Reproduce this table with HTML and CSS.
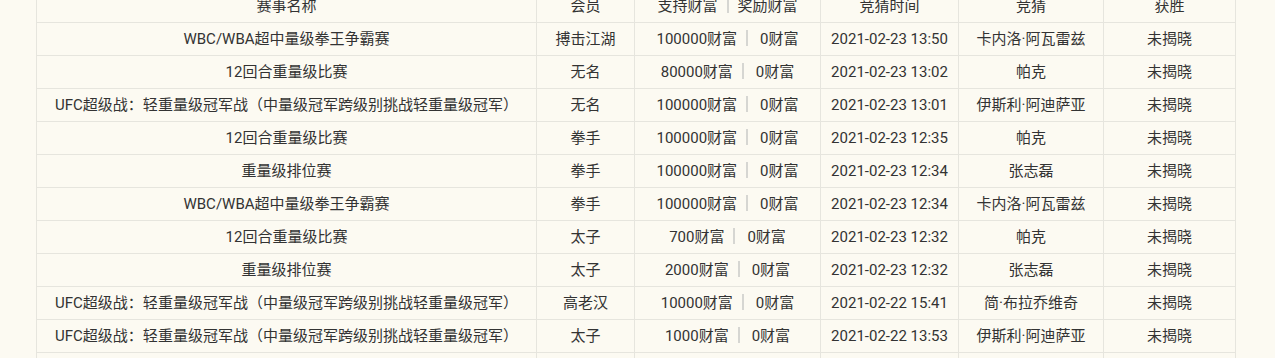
FILE: index.html
```html
<!DOCTYPE html>
<html lang="zh-CN">
<head>
<meta charset="utf-8">
<link rel="stylesheet" href="styles.css">
</head>
<body>
<div class="wrap">
<table class="list">
<colgroup>
<col class="c1"><col class="c2"><col class="c3"><col class="c4"><col class="c5"><col class="c6">
</colgroup>
<thead>
<tr><th>赛事名称</th><th>会员</th><th>支持财富<span class="sep"></span>奖励财富</th><th>竞猜时间</th><th>竞猜</th><th>获胜</th></tr>
</thead>
<tbody>
<tr><td>WBC/WBA超中量级拳王争霸赛</td><td>搏击江湖</td><td>100000财富<span class="sep"></span><span class="r">0财富</span></td><td>2021-02-23 13:50</td><td>卡内洛·阿瓦雷兹</td><td>未揭晓</td></tr>
<tr><td>12回合重量级比赛</td><td>无名</td><td>80000财富<span class="sep"></span><span class="r">0财富</span></td><td>2021-02-23 13:02</td><td>帕克</td><td>未揭晓</td></tr>
<tr><td>UFC超级战：轻重量级冠军战（中量级冠军跨级别挑战轻重量级冠军）</td><td>无名</td><td>100000财富<span class="sep"></span><span class="r">0财富</span></td><td>2021-02-23 13:01</td><td>伊斯利·阿迪萨亚</td><td>未揭晓</td></tr>
<tr><td>12回合重量级比赛</td><td>拳手</td><td>100000财富<span class="sep"></span><span class="r">0财富</span></td><td>2021-02-23 12:35</td><td>帕克</td><td>未揭晓</td></tr>
<tr><td>重量级排位赛</td><td>拳手</td><td>100000财富<span class="sep"></span><span class="r">0财富</span></td><td>2021-02-23 12:34</td><td>张志磊</td><td>未揭晓</td></tr>
<tr><td>WBC/WBA超中量级拳王争霸赛</td><td>拳手</td><td>100000财富<span class="sep"></span><span class="r">0财富</span></td><td>2021-02-23 12:34</td><td>卡内洛·阿瓦雷兹</td><td>未揭晓</td></tr>
<tr><td>12回合重量级比赛</td><td>太子</td><td>700财富<span class="sep"></span><span class="r">0财富</span></td><td>2021-02-23 12:32</td><td>帕克</td><td>未揭晓</td></tr>
<tr><td>重量级排位赛</td><td>太子</td><td>2000财富<span class="sep"></span><span class="r">0财富</span></td><td>2021-02-23 12:32</td><td>张志磊</td><td>未揭晓</td></tr>
<tr><td>UFC超级战：轻重量级冠军战（中量级冠军跨级别挑战轻重量级冠军）</td><td>高老汉</td><td>10000财富<span class="sep"></span><span class="r">0财富</span></td><td>2021-02-22 15:41</td><td>简·布拉乔维奇</td><td>未揭晓</td></tr>
<tr><td>UFC超级战：轻重量级冠军战（中量级冠军跨级别挑战轻重量级冠军）</td><td>太子</td><td>1000财富<span class="sep"></span><span class="r">0财富</span></td><td>2021-02-22 13:53</td><td>伊斯利·阿迪萨亚</td><td>未揭晓</td></tr>
<tr><td>&nbsp;</td><td></td><td></td><td></td><td></td><td></td></tr>
</tbody>
</table>
</div>
</body>
</html>
```

FILE: styles.css
```css
html, body {
  margin: 0;
  padding: 0;
  background: #fcfaf2;
  overflow: hidden;
}
body {
  font-family: Roboto, "Noto Sans CJK SC", sans-serif;
  font-size: 15px;
  color: #333;
}
.wrap {
  margin: -11px 0 0 36px;
  width: 1199px;
}
.list {
  border-collapse: collapse;
  table-layout: fixed;
  width: 1199px;
}
.c1 { width: 500px; }
.c2 { width: 98px; }
.c3 { width: 186px; }
.c4 { width: 138px; }
.c5 { width: 145px; }
.c6 { width: 132px; }
.list th, .list td {
  border: 1px solid #e6e5de;
  height: 32px;
  padding: 0;
  text-align: center;
  vertical-align: middle;
  font-weight: normal;
  white-space: nowrap;
  line-height: 20px;
}
.sep {
  display: inline-block;
  width: 2px;
  height: 16px;
  background: #d6d6d2;
  margin: 0 9px;
  vertical-align: -2px;
}
.list td .sep { margin: 0 12px 0 9px; }
.r { display: inline-block; }
```
